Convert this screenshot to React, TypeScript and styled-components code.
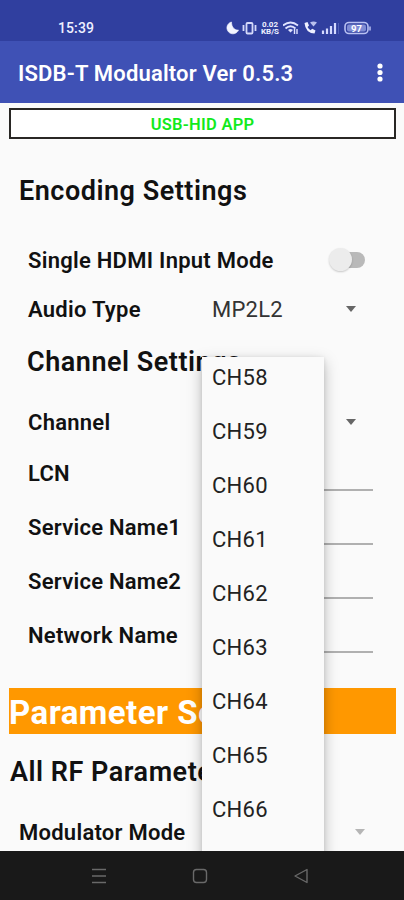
import React from "react";
import styled, { createGlobalStyle } from "styled-components";

const Global = createGlobalStyle`
  *, *::before, *::after { box-sizing: border-box; }
  html, body { margin: 0; padding: 0; }
  body { font-family: Roboto, "Liberation Sans", sans-serif; background: #fafafa; }
`;

const Screen = styled.div`
  position: relative;
  display: flex;
  flex-direction: column;
  width: 404px;
  height: 900px;
  overflow: hidden;
  background: #fafafa;
  color: #111;
`;

const StatusBar = styled.div`
  display: flex;
  align-items: center;
  justify-content: space-between;
  flex: none;
  height: 41px;
  padding: 14px 23px 0 58px;
  background: #303f9f;
  color: #eef0ff;
`;

const Clock = styled.span`
  font-size: 14px;
  font-weight: 500;
  letter-spacing: 0.1px;
`;

const StatusIcons = styled.div`
  display: flex;
  align-items: center;
  height: 20px;
`;

const Speed = styled.div`
  display: flex;
  flex-direction: column;
  width: 20px;
  margin: 0 3px 0 1px;
  font-size: 8px;
  font-weight: 700;
  line-height: 7px;
  text-align: center;
`;

const AppBar = styled.header`
  display: flex;
  align-items: center;
  justify-content: space-between;
  flex: none;
  height: 62px;
  padding: 2px 20px 0 18px;
  background: #3f51b5;
  color: #fff;
`;

const Title = styled.h1`
  margin: 0;
  font-size: 22px;
  font-weight: 600;
  letter-spacing: 0.18px;
  white-space: nowrap;
`;

const Content = styled.main`
  flex: 1;
  min-height: 0;
  overflow: hidden;
  padding: 5px 8px 0 9px;
`;

const Banner = styled.div`
  display: flex;
  align-items: center;
  justify-content: center;
  height: 31px;
  padding-top: 2px;
  border: 2px solid #292724;
  background: #fff;
  color: #12ea1c;
  font-size: 16.5px;
  font-weight: 600;
  letter-spacing: 0.25px;
`;

const Heading = styled.h2<{ $height: number; $indent: number }>`
  display: flex;
  align-items: center;
  height: ${(p) => p.$height}px;
  margin: 0;
  padding-left: ${(p) => p.$indent}px;
  font-size: 27px;
  font-weight: 600;
  letter-spacing: 0.52px;
  white-space: nowrap;
`;

const Group = styled.section<{ $top?: number; $bottom?: number }>`
  padding: ${(p) => p.$top ?? 0}px 0 ${(p) => p.$bottom ?? 0}px;
`;

const Row = styled.div<{ $height: number; $indent?: number; $end?: number }>`
  display: grid;
  grid-template-columns: ${(p) => 203 - (p.$indent ?? 19)}px 1fr auto;
  align-items: center;
  height: ${(p) => p.$height}px;
  padding: 0 ${(p) => p.$end ?? 40}px 0 ${(p) => p.$indent ?? 19}px;
`;

const Label = styled.label`
  font-size: 22px;
  font-weight: 600;
  letter-spacing: 0.26px;
  white-space: nowrap;
`;

const Value = styled.span`
  font-size: 22px;
  letter-spacing: 0.25px;
  color: #333;
`;

const Field = styled.div`
  grid-column: 2 / 4;
  align-self: end;
  height: 32px;
  margin-bottom: 9px;
  border-bottom: 2px solid #b0b0b0;
`;

const Caret = styled.i<{ $muted?: boolean }>`
  grid-column: 3;
  width: 0;
  height: 0;
  margin-top: -1px;
  border: 5.5px solid transparent;
  border-top: 6px solid ${(p) => (p.$muted ? "#b5b5b5" : "#666")};
  border-bottom: 0;
`;

const Switch = styled.div`
  grid-column: 3;
  display: flex;
  align-items: center;
  width: 33px;
  height: 16px;
  margin-top: -2px;
  border-radius: 8px;
  background: #b9b9b9;
`;

const Thumb = styled.span`
  flex: none;
  width: 23px;
  height: 23px;
  margin-left: -3px;
  border-radius: 50%;
  background: #ececec;
  box-shadow: 0 1px 2px rgba(0, 0, 0, 0.2);
`;

const OrangeBar = styled.h2`
  display: flex;
  align-items: center;
  height: 46px;
  margin: 0;
  padding-top: 3px;
  background: #ff9800;
  color: #fff;
  font-size: 33px;
  font-weight: 700;
  letter-spacing: 0.45px;
  white-space: nowrap;
`;

const Menu = styled.div`
  position: absolute;
  left: 202px;
  top: 357px;
  width: 122px;
  height: 520px;
  background: #fafafa;
  box-shadow: 0 5px 14px rgba(0, 0, 0, 0.26), 0 1px 4px rgba(0, 0, 0, 0.1);
`;

const MenuItem = styled.div`
  display: flex;
  align-items: center;
  height: 54px;
  padding-left: 10px;
  font-size: 22px;
  letter-spacing: 0.25px;
  color: #222;

  &:first-child { margin-top: -7px; }
`;

const NavBar = styled.nav`
  position: relative;
  z-index: 1;
  display: flex;
  justify-content: space-between;
  flex: none;
  height: 49px;
  padding: 16px 94px 0 90px;
  background: #191919;
`;

const CHANNELS = ["CH58", "CH59", "CH60", "CH61", "CH62", "CH63", "CH64", "CH65", "CH66"];

const StatusGlyphs = () => (
  <StatusIcons>
    <svg width="34" height="16" viewBox="0 0 34 16" fill="none">
      <path d="M6.500 2A6 6 0 1 0 13.500 10C10 10.500 6.500 7.500 6.500 2Z" fill="#f3f5ff" stroke="#f3f5ff" strokeWidth=".6" />
      <g stroke="#d5d9fa" strokeWidth="1.800">
        <rect x="21.500" y="3" width="6" height="10.500" rx="1" />
        <path d="M18.500 5v6M30.500 5v6" />
      </g>
    </svg>
    <Speed>
      <span>0.02</span>
      <span>KB/S</span>
    </Speed>
    <svg width="98" height="16" viewBox="0 0 98 16" fill="none">
      <g stroke="#dfe3ff" strokeWidth="1.800">
        <path d="M0 5.500Q7.500-.5 15 5.500M2.500 8.500Q7.500 4 12.500 8.500" />
        <path d="M5 10Q7.500 8 10 10L7.500 12.500Z" fill="#dfe3ff" stroke="none" />
        <path d="M11.500 9v5M14 9v5" strokeWidth="1.400" />
      </g>
      <path d="M21.500 3l3-1 1.500 3.500-1.500 1.500q1 2 3 3.200l1.800-1.400 3.200 1.800-1 3Q22.500 13 21.500 3Z" fill="#eef0ff" />
      <path d="M27 2.500q3.500-2 7 0l-3.500 4Z" fill="#b9c0ee" />
      <path d="M40 10.500v3.500M44 8.500v5.500M48 6v8M52 3v11" stroke="#d5daff" strokeWidth="2.200" />
      <path d="M55.500 3v11" stroke="#5160b8" />
      <rect x="62" y="2.500" width="23" height="11" rx="4" stroke="#b9c1f2" strokeWidth="1.600" />
      <rect x="64" y="4.500" width="19" height="7" rx="2" fill="#7f8cd4" />
      <path d="M87 6.500v4" stroke="#b9c1f2" strokeWidth="1.500" />
      <text x="73.500" y="11.500" fill="#fff" fontSize="9.500" fontWeight="700" textAnchor="middle">97</text>
    </svg>
  </StatusIcons>
);

export default function App() {
  return (
    <>
      <Global />
      <Screen>
        <StatusBar>
          <Clock>15:39</Clock>
          <StatusGlyphs />
        </StatusBar>
        <AppBar>
          <Title>ISDB-T Modualtor Ver 0.5.3</Title>
          <svg width="8" height="22" viewBox="0 0 8 22" fill="#fff">
            <circle cx="4" cy="4" r="2.600" />
            <circle cx="4" cy="10.500" r="2.600" />
            <circle cx="4" cy="17" r="2.600" />
          </svg>
        </AppBar>
        <Content>
          <Banner>USB-HID APP</Banner>
          <Heading $height={104} $indent={10}>Encoding Settings</Heading>
          <Group>
            <Row $height={35} $end={31}>
              <Label>Single HDMI Input Mode</Label>
              <Switch><Thumb /></Switch>
            </Row>
            <Row $height={62}>
              <Label>Audio Type</Label>
              <Value>MP2L2</Value>
              <Caret />
            </Row>
          </Group>
          <Heading $height={43} $indent={18}>Channel Settings</Heading>
          <Group $top={14} $bottom={26}>
            <Row $height={50}><Label>Channel</Label><Caret /></Row>
            <Row $height={53} $end={23}><Label>LCN</Label><Field /></Row>
            <Row $height={54} $end={23}><Label>Service Name1</Label><Field /></Row>
            <Row $height={54} $end={23}><Label>Service Name2</Label><Field /></Row>
            <Row $height={54} $end={23}><Label>Network Name</Label><Field /></Row>
          </Group>
          <OrangeBar>Parameter Settings</OrangeBar>
          <Heading $height={76} $indent={1}>All RF Parameters</Heading>
          <Row $height={44} $indent={10} $end={31}>
            <Label>Modulator Mode</Label>
            <Caret $muted />
          </Row>
        </Content>
        <Menu>
          {CHANNELS.map((name) => <MenuItem key={name}>{name}</MenuItem>)}
        </Menu>
        <NavBar>
          <svg width="18" height="18" viewBox="0 0 18 18" fill="none" stroke="#696969" strokeWidth="1.400">
            <path d="M2 2.500h14M2 9h14M2 15.500h14" />
          </svg>
          <svg width="18" height="18" viewBox="0 0 18 18" fill="none" stroke="#696969" strokeWidth="1.400">
            <rect x="2.500" y="2.500" width="13" height="13" rx="3" />
          </svg>
          <svg width="18" height="18" viewBox="0 0 18 18" fill="none" stroke="#696969" strokeWidth="1.400" strokeLinejoin="round">
            <path d="M15 2.500v13L3 9Z" />
          </svg>
        </NavBar>
      </Screen>
    </>
  );
}
